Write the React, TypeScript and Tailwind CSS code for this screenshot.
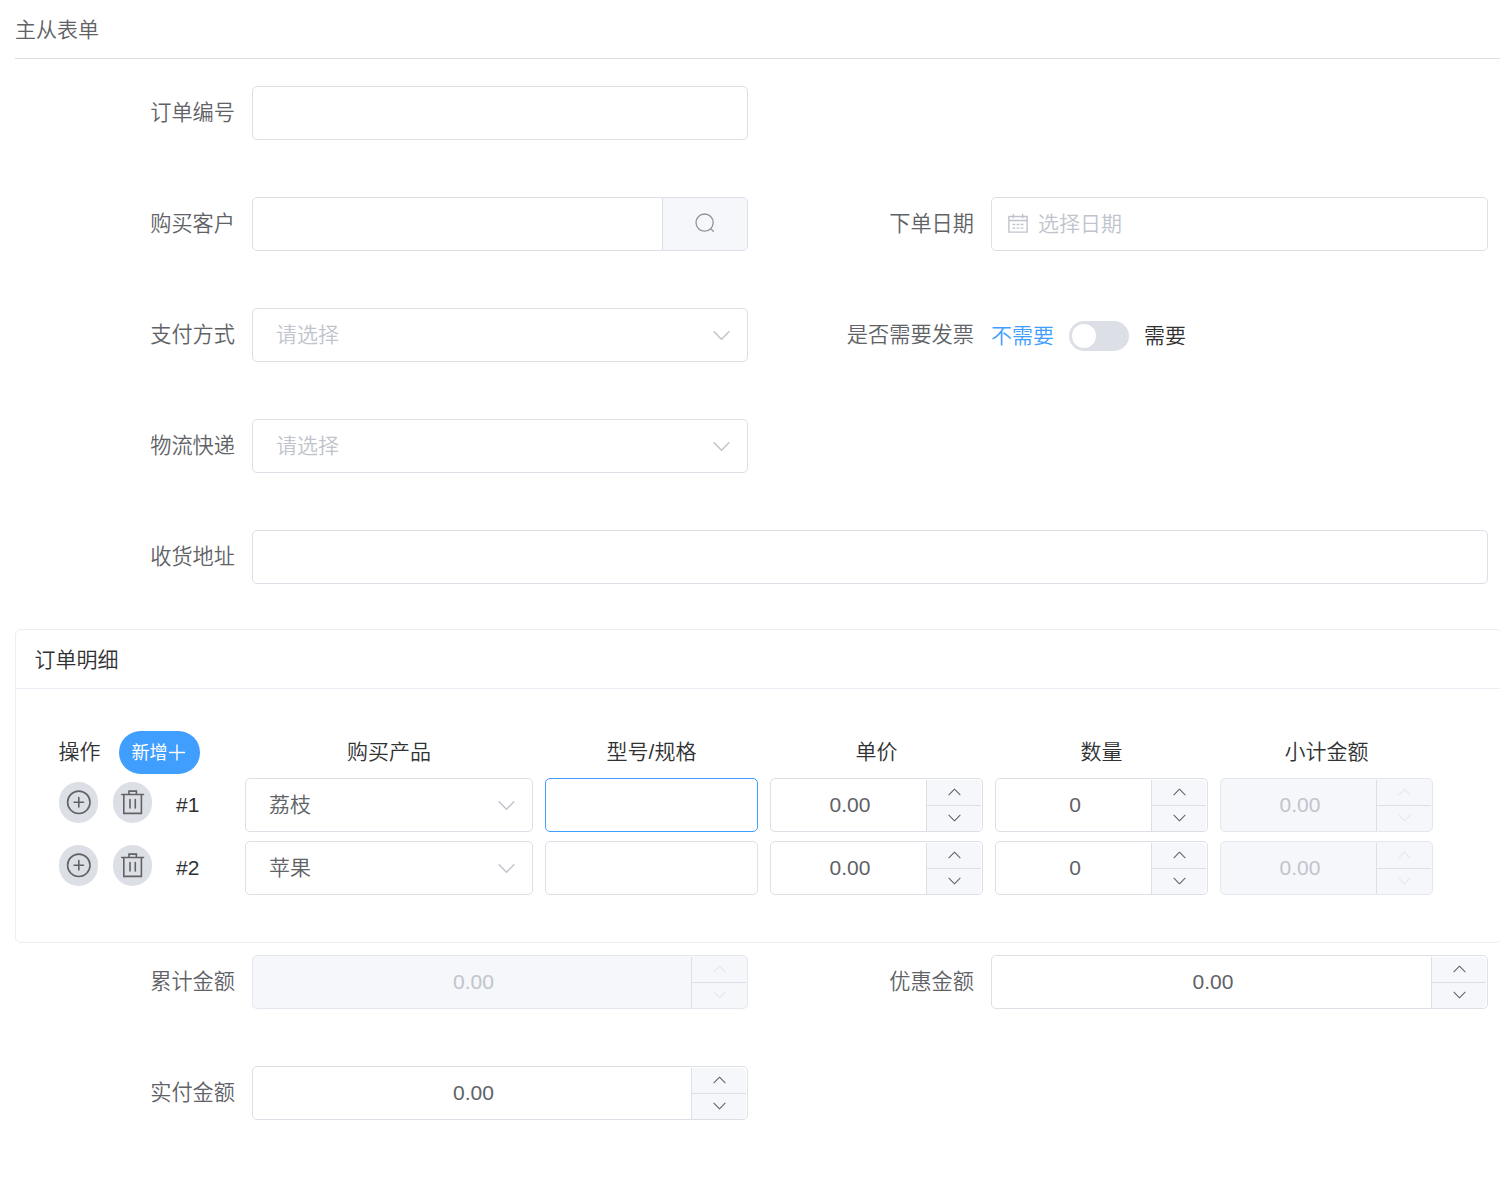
import { useState } from 'react'
import type { ReactNode } from 'react'
import clsx from 'clsx'

type Line = { id: number; product: string; spec: string }

const LINES: Line[] = [
  { id: 1, product: '荔枝', spec: '' },
  { id: 2, product: '苹果', spec: '' },
]

const GRID = 'grid grid-cols-[217px_288px_213px_213px_213px_213px] gap-x-3'

function Chevron({ up = false, className }: { up?: boolean; className?: string }) {
  return (
    <svg viewBox="0 0 16 10" fill="none" stroke="currentColor" strokeLinecap="round" strokeLinejoin="round" className={className}>
      <path d={up ? 'M1 8.5 8 1.5 15 8.5' : 'M1 1.5 8 8.5 15 1.5'} />
    </svg>
  )
}

function SearchIcon() {
  return (
    <svg width="22" height="22" viewBox="0 0 22 22" fill="none" stroke="currentColor" strokeWidth="1.3" strokeLinecap="round">
      <circle cx="10.6" cy="9.6" r="8.6" />
      <path d="m16.9 15.9 2.4 2.4" />
    </svg>
  )
}

function CalendarIcon() {
  return (
    <svg width="22" height="22" viewBox="0 0 22 22" fill="none" stroke="currentColor" strokeWidth="1.4">
      <path d="M1.9 3.5h18.2v15.6H1.9zM1.9 7.5h18.2M6.3 1v4.2M15.7 1v4.2" />
      <path d="M5.5 11.5h2.8M9.6 11.5h2.8M13.7 11.5h2.8M5.5 15.1h2.8M9.6 15.1h2.8M13.7 15.1h2.8" />
    </svg>
  )
}

function AddIcon() {
  return (
    <svg width="26" height="26" viewBox="0 0 26 26" fill="none" stroke="currentColor" strokeWidth="1.6" strokeLinecap="round">
      <circle cx="12.8" cy="12.3" r="11.2" />
      <path d="M8.1 12.3h9.4M12.8 7.6v9.4" />
    </svg>
  )
}

function TrashIcon() {
  return (
    <svg width="26" height="26" viewBox="0 0 26 26" fill="none" stroke="currentColor" strokeWidth="1.6" strokeLinecap="round">
      <path d="M1.7 4.5h21.8M3.8 4.5v18.9h17.6V4.5M9 4.2V1.1h7.4v3.1M10 9.6v8.4M15.3 9.6v8.4" />
    </svg>
  )
}

function Field({ label, wide, right, children }: { label: string; wide?: boolean; right?: boolean; children: ReactNode }) {
  return (
    <div className={clsx('flex h-[54px]', wide ? 'w-[1488px]' : right ? 'w-[740px]' : 'w-[748px]')}>
      <label className="flex-1 pr-[17px] text-right text-[21.2px] leading-[53px] whitespace-nowrap">{label}</label>
      <div className={wide ? 'w-[1236px]' : right ? 'w-[497px]' : 'w-[496px]'}>{children}</div>
    </div>
  )
}

function TextInput({ active }: { active?: boolean }) {
  return (
    <input
      className={clsx(
        'block h-[54px] w-full rounded-[5px] border bg-white px-5 outline-none',
        active ? 'border-[#409eff]' : 'border-[#dcdfe6]',
      )}
    />
  )
}

function SelectBox({ value, placeholder }: { value?: string; placeholder?: string }) {
  return (
    <div className="flex h-[54px] items-center justify-between rounded-[5px] border border-[#dcdfe6] pr-[17px] pl-[23px]">
      <span className={value ? '' : 'text-[#c0c4cc]'}>{value || placeholder}</span>
      <Chevron className="h-[11px] w-[17px] text-[#c0c4cc] [stroke-width:1.4]" />
    </div>
  )
}

function NumberInput({ value, disabled }: { value: string; disabled?: boolean }) {
  return (
    <div
      className={clsx(
        'flex h-[54px] overflow-hidden rounded-[5px] border',
        disabled ? 'border-[#e4e7ed] bg-[#f5f7fa] text-[#c0c4cc]' : 'border-[#dcdfe6]',
      )}
    >
      <span className="flex-1 pl-[3px] text-center leading-[52px]">{value}</span>
      <div
        className={clsx(
          'mt-px mr-px flex w-[55px] flex-col rounded-r-[5px] border-l border-[#dcdfe6] bg-[#f5f7fa]',
          disabled ? 'text-[#e4e7ed]' : 'text-[#606266]',
        )}
      >
        <span className="flex h-[26px] items-center justify-center border-b border-[#dcdfe6] pb-px pl-px">
          <Chevron up className="h-2 w-[13px] [stroke-width:1.3]" />
        </span>
        <span className="flex flex-1 items-center justify-center pb-0.5 pl-px">
          <Chevron className="h-2 w-[13px] [stroke-width:1.3]" />
        </span>
      </div>
    </div>
  )
}

function RoundButton({ label, children }: { label: string; children: ReactNode }) {
  return (
    <button aria-label={label} className="flex h-[41px] w-[39px] items-center justify-center rounded-full bg-[#dcdfe6] text-[#606266]">
      {children}
    </button>
  )
}

export default function App() {
  const [invoice, setInvoice] = useState(false)

  return (
    <div className="h-[1186px] w-[1500px] overflow-hidden bg-white font-['Liberation_Sans','Noto_Sans_CJK_SC',sans-serif] text-[21px] font-[350] text-[#606266]">
      <h1 className="ml-[15px] h-[59px] border-b border-[#dcdfe6] font-[350] leading-[59px]">主从表单</h1>

      <div className="mt-[27px] flex flex-col gap-[57px]">
        <Field label="订单编号">
          <TextInput />
        </Field>
        <div className="flex">
          <Field label="购买客户">
            <div className="flex h-[54px] overflow-hidden rounded-[5px] border border-[#dcdfe6]">
              <input className="min-w-0 flex-1 px-5 outline-none" />
              <button aria-label="search" className="flex w-[85px] items-center justify-center border-l border-[#dcdfe6] bg-[#f5f7fa] text-[#909399]">
                <SearchIcon />
              </button>
            </div>
          </Field>
          <Field label="下单日期" right>
            <div className="flex h-[54px] items-center gap-[9px] rounded-[5px] border border-[#dcdfe6] pl-[15px] text-[#c0c4cc]">
              <CalendarIcon />
              <span>选择日期</span>
            </div>
          </Field>
        </div>
        <div className="flex">
          <Field label="支付方式">
            <SelectBox placeholder="请选择" />
          </Field>
          <Field label="是否需要发票" right>
            <div className="flex h-[56px] items-center text-[#303133]">
              <span className={invoice ? '' : 'text-[#409eff]'}>不需要</span>
              <button
                role="switch"
                aria-checked={invoice}
                aria-label="invoice"
                onClick={() => setInvoice(!invoice)}
                className={clsx('mx-[15px] flex h-[30px] w-[60px] items-center rounded-full px-[3px]', invoice ? 'justify-end bg-[#409eff]' : 'bg-[#dcdfe6]')}
              >
                <span className="size-[24px] rounded-full bg-white" />
              </button>
              <span className={invoice ? 'text-[#409eff]' : ''}>需要</span>
            </div>
          </Field>
        </div>
        <Field label="物流快递">
          <SelectBox placeholder="请选择" />
        </Field>
        <Field label="收货地址" wide>
          <TextInput />
        </Field>
      </div>

      <section className="mt-[45px] ml-[15px] h-[314px] w-[1487px] rounded-[6px] border border-[#ebeef5] text-[#303133]">
        <h2 className="h-[59px] border-b border-[#ebeef5] pl-[18.5px] font-[350] leading-[59px]">订单明细</h2>
        <div className="flex flex-col pt-[42px]">
          <div className={clsx(GRID, 'h-[47px] text-center leading-[42px]')}>
            <div className="flex pl-[42.5px]">
              <span>操作</span>
              <button className="ml-[18.5px] flex h-[43px] w-[81px] items-center justify-center rounded-full bg-[#409eff] pr-0.5 text-[18px] font-normal text-white">
                新增
                <svg width="18" height="18" viewBox="0 0 18 18" stroke="currentColor" strokeWidth="1.4" strokeLinecap="round">
                  <path d="M1.5 8.5h15M9 1v15" />
                </svg>
              </button>
            </div>
            <span>购买产品</span>
            <span>型号/规格</span>
            <span>单价</span>
            <span>数量</span>
            <span>小计金额</span>
          </div>
          <div className="flex flex-col gap-[9px]">
            {LINES.map((line, i) => (
              <div key={line.id} className={clsx(GRID, 'h-[54px]')}>
                <div className="flex pt-1 pl-[43px]">
                  <RoundButton label="add">
                    <AddIcon />
                  </RoundButton>
                  <div className="ml-[15px]">
                    <RoundButton label="delete">
                      <TrashIcon />
                    </RoundButton>
                  </div>
                  <span className="ml-6 leading-[46px]">#{line.id}</span>
                </div>
                <div className="text-[#606266]">
                  <SelectBox value={line.product} />
                </div>
                <TextInput active={i === 0} />
                <div className="text-[#606266]">
                  <NumberInput value="0.00" />
                </div>
                <div className="text-[#606266]">
                  <NumberInput value="0" />
                </div>
                <NumberInput value="0.00" disabled />
              </div>
            ))}
          </div>
        </div>
      </section>

      <div className="mt-3 flex flex-col gap-[57px]">
        <div className="flex">
          <Field label="累计金额">
            <NumberInput value="0.00" disabled />
          </Field>
          <Field label="优惠金额" right>
            <NumberInput value="0.00" />
          </Field>
        </div>
        <Field label="实付金额">
          <NumberInput value="0.00" />
        </Field>
      </div>
    </div>
  )
}
